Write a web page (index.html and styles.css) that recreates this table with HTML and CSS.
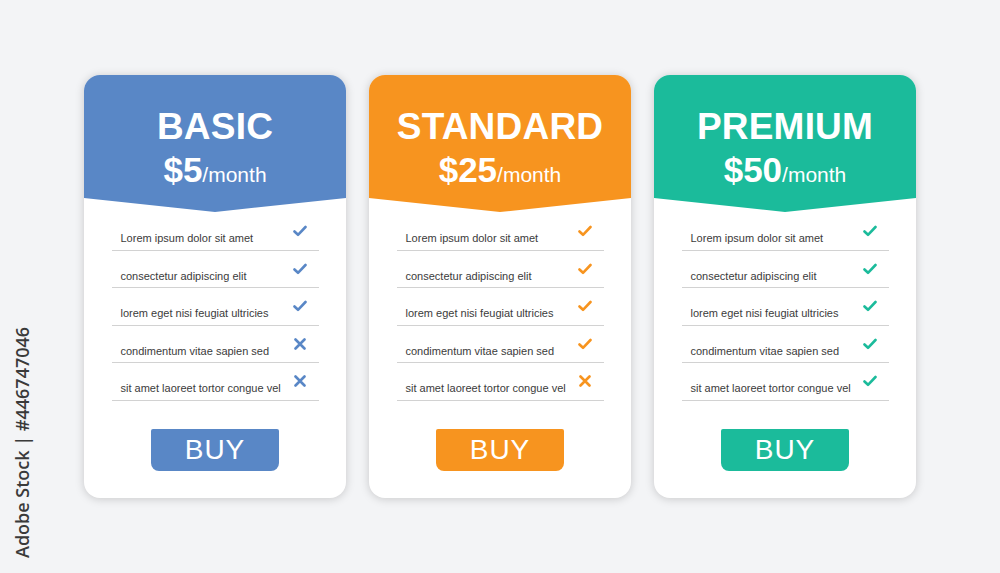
FILE: index.html
```html
<!DOCTYPE html>
<html>
<head>
<meta charset="utf-8">
<link rel="stylesheet" href="styles.css">
</head>
<body>
<div class="stock">Adobe Stock | #446747046</div>
<main class="plans">
  <section class="card basic">
    <header class="head">
      <h2 class="title">BASIC</h2>
      <div class="price"><span class="amount">$5</span><span class="per">/month</span></div>
    </header>
    <ul class="features">
      <li class="row"><span class="txt">Lorem ipsum dolor sit amet</span><svg class="ic" viewBox="0 0 14 12"><path d="M1.5 6.5 L5 9.8 L12.5 2" /></svg></li>
      <li class="row"><span class="txt">consectetur adipiscing elit</span><svg class="ic" viewBox="0 0 14 12"><path d="M1.5 6.5 L5 9.8 L12.5 2" /></svg></li>
      <li class="row"><span class="txt">lorem eget nisi feugiat ultricies</span><svg class="ic" viewBox="0 0 14 12"><path d="M1.5 6.5 L5 9.8 L12.5 2" /></svg></li>
      <li class="row"><span class="txt">condimentum vitae sapien sed</span><svg class="ic" viewBox="0 0 14 12"><path d="M2.5 1.5 L11.5 10.5 M11.5 1.5 L2.5 10.5" /></svg></li>
      <li class="row"><span class="txt">sit amet laoreet tortor congue vel</span><svg class="ic" viewBox="0 0 14 12"><path d="M2.5 1.5 L11.5 10.5 M11.5 1.5 L2.5 10.5" /></svg></li>
    </ul>
    <button class="buy">BUY</button>
  </section>
  <section class="card standard">
    <header class="head">
      <h2 class="title">STANDARD</h2>
      <div class="price"><span class="amount">$25</span><span class="per">/month</span></div>
    </header>
    <ul class="features">
      <li class="row"><span class="txt">Lorem ipsum dolor sit amet</span><svg class="ic" viewBox="0 0 14 12"><path d="M1.5 6.5 L5 9.8 L12.5 2" /></svg></li>
      <li class="row"><span class="txt">consectetur adipiscing elit</span><svg class="ic" viewBox="0 0 14 12"><path d="M1.5 6.5 L5 9.8 L12.5 2" /></svg></li>
      <li class="row"><span class="txt">lorem eget nisi feugiat ultricies</span><svg class="ic" viewBox="0 0 14 12"><path d="M1.5 6.5 L5 9.8 L12.5 2" /></svg></li>
      <li class="row"><span class="txt">condimentum vitae sapien sed</span><svg class="ic" viewBox="0 0 14 12"><path d="M1.5 6.5 L5 9.8 L12.5 2" /></svg></li>
      <li class="row"><span class="txt">sit amet laoreet tortor congue vel</span><svg class="ic" viewBox="0 0 14 12"><path d="M2.5 1.5 L11.5 10.5 M11.5 1.5 L2.5 10.5" /></svg></li>
    </ul>
    <button class="buy">BUY</button>
  </section>
  <section class="card premium">
    <header class="head">
      <h2 class="title">PREMIUM</h2>
      <div class="price"><span class="amount">$50</span><span class="per">/month</span></div>
    </header>
    <ul class="features">
      <li class="row"><span class="txt">Lorem ipsum dolor sit amet</span><svg class="ic" viewBox="0 0 14 12"><path d="M1.5 6.5 L5 9.8 L12.5 2" /></svg></li>
      <li class="row"><span class="txt">consectetur adipiscing elit</span><svg class="ic" viewBox="0 0 14 12"><path d="M1.5 6.5 L5 9.8 L12.5 2" /></svg></li>
      <li class="row"><span class="txt">lorem eget nisi feugiat ultricies</span><svg class="ic" viewBox="0 0 14 12"><path d="M1.5 6.5 L5 9.8 L12.5 2" /></svg></li>
      <li class="row"><span class="txt">condimentum vitae sapien sed</span><svg class="ic" viewBox="0 0 14 12"><path d="M1.5 6.5 L5 9.8 L12.5 2" /></svg></li>
      <li class="row"><span class="txt">sit amet laoreet tortor congue vel</span><svg class="ic" viewBox="0 0 14 12"><path d="M1.5 6.5 L5 9.8 L12.5 2" /></svg></li>
    </ul>
    <button class="buy">BUY</button>
  </section>
</main>
</body>
</html>
```
FILE: styles.css
```css
* { box-sizing: border-box; }
html, body { margin: 0; padding: 0; }
body {
  width: 1000px;
  height: 573px;
  background: #f3f4f6;
  font-family: "Liberation Sans", Arial, sans-serif;
  position: relative;
  overflow: hidden;
}
.stock {
  position: absolute;
  left: 10px;
  top: 328px;
  height: 230px;
  writing-mode: vertical-rl;
  transform: rotate(180deg);
  font-family: "Open Sans", sans-serif;
  font-size: 18px;
  font-weight: 600;
  color: #3a3a3a;
  white-space: nowrap;
  text-align: left;
}
.plans {
  display: flex;
  justify-content: center;
  gap: 23px;
  padding-top: 75px;
}
.card {
  width: 262px;
  height: 423px;
  background: #fff;
  border-radius: 16px;
  box-shadow: 0 1px 10px rgba(0, 0, 0, 0.18);
  overflow: hidden;
  display: flex;
  flex-direction: column;
  align-items: center;
}
.basic { --c: #5987c6; }
.standard { --c: #f7941f; }
.premium { --c: #1bbb9b; }
.head {
  width: 100%;
  height: 137px;
  background: var(--c);
  clip-path: polygon(0 0, 100% 0, 100% 123px, 50% 137px, 0 123px);
  color: #fff;
  text-align: center;
  padding-top: 31px;
}
.title {
  margin: 0;
  font-size: 37px;
  line-height: 42px;
  font-weight: 700;
  letter-spacing: 0.2px;
}
.price {
  margin-top: 3px;
  line-height: 38px;
}
.amount {
  font-size: 35px;
  font-weight: 700;
}
.per {
  font-size: 21px;
  font-weight: 400;
}
.features {
  list-style: none;
  margin: 1px 0 0;
  padding: 0;
  width: 207px;
}
.row {
  display: flex;
  justify-content: space-between;
  align-items: flex-start;
  height: 37.5px;
  padding: 12px 12px 0 9px;
  border-bottom: 1.5px solid #d2d2d2;
}
.txt {
  margin-top: 6px;
  font-size: 11px;
  line-height: 14px;
  color: #3b3b3b;
}
.ic {
  width: 14px;
  height: 12px;
  fill: none;
  stroke: var(--c);
  stroke-width: 2.6;
  stroke-linecap: round;
  stroke-linejoin: round;
}
.buy {
  margin-top: 28px;
  width: 128px;
  height: 42px;
  border: 0;
  border-radius: 2px 2px 8px 8px;
  background: var(--c);
  color: #fff;
  font-family: "Liberation Sans", Arial, sans-serif;
  font-size: 28px;
  letter-spacing: 1px;
  padding: 0;
  line-height: 42px;
}
```
